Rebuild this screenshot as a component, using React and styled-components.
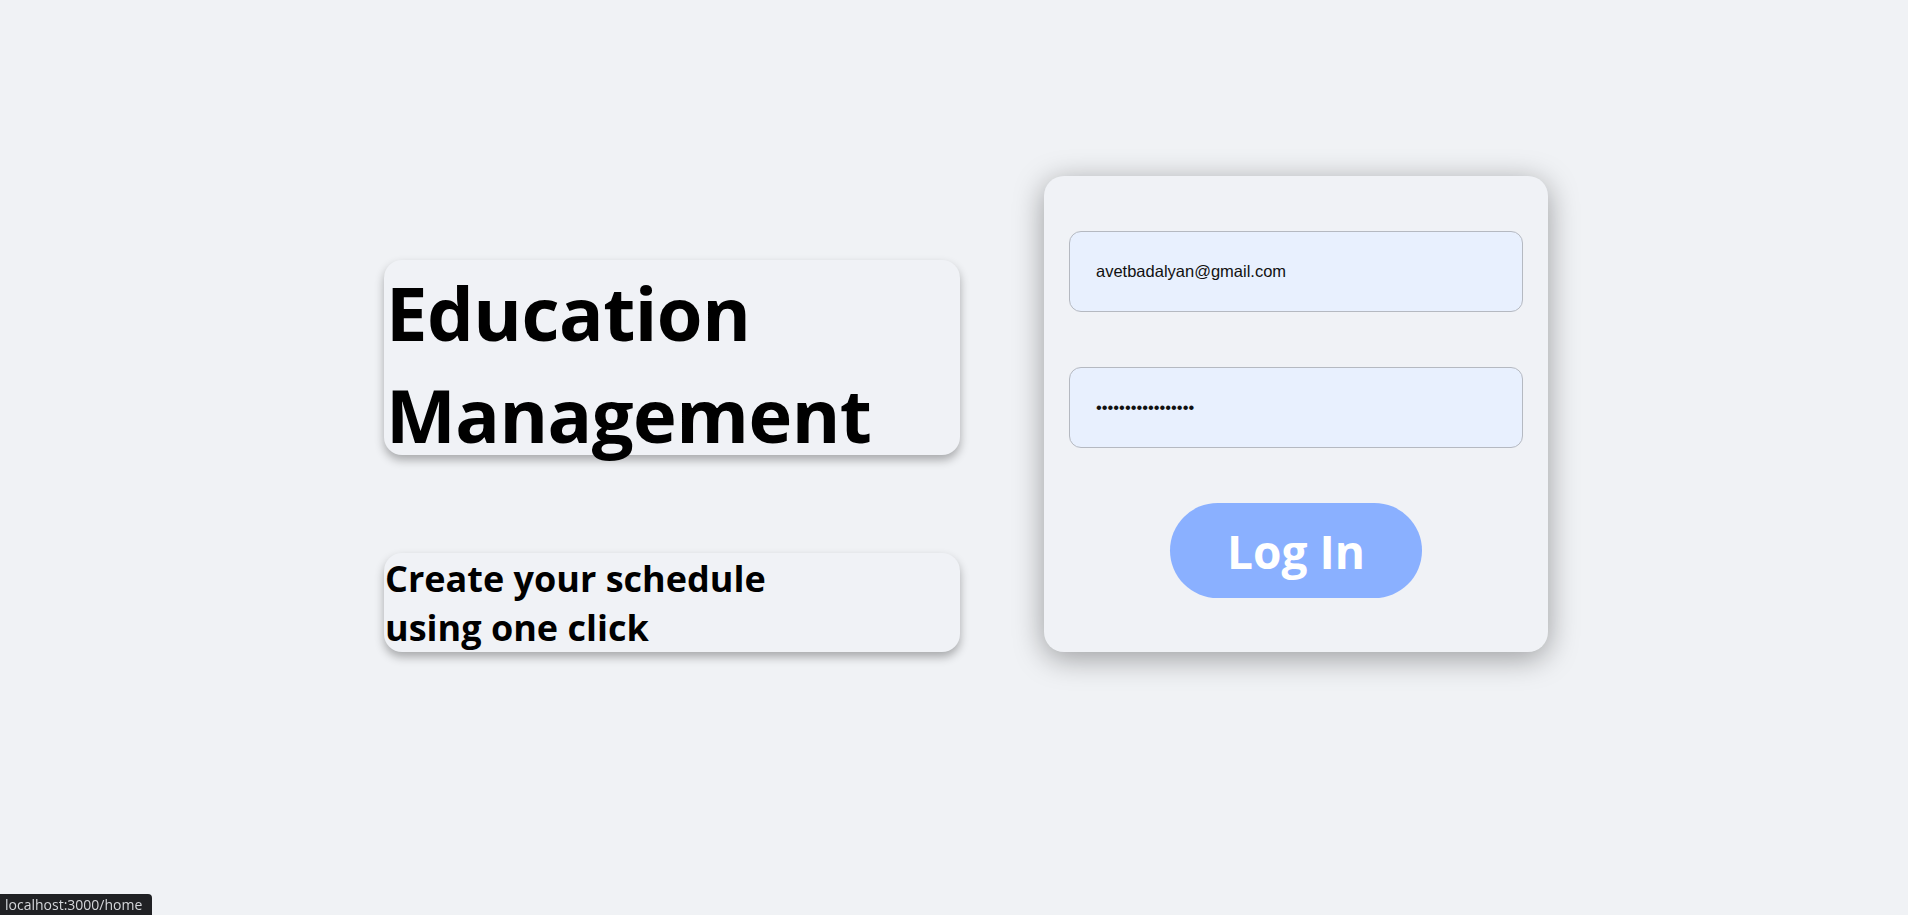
import React from "react";
import styled, { createGlobalStyle } from "styled-components";

const GlobalStyle = createGlobalStyle`
	html, body {
		margin: 0;
		padding: 0;
		background: #f0f2f5;
	}
	body {
		font-family: "Open Sans", "Noto Sans", sans-serif;
		min-height: 915px;
	}
`;

const Page = () => {
	return (
		<Main>
			<Intro>
				<TitleCard>
					<Title>Education Management</Title>
				</TitleCard>
				<SubtitleCard>
					<Subtitle>Create your schedule using one click</Subtitle>
				</SubtitleCard>
			</Intro>
			<LoginCard>
				<Field type="email" defaultValue="avetbadalyan@gmail.com" />
				<Field type="password" defaultValue="avetbadalyan12345" />
				<LoginButton type="button">Log In</LoginButton>
			</LoginCard>
			<StatusBar>localhost:3000/home</StatusBar>
		</Main>
	);
};

const Main = styled.main`
	display: flex;
	justify-content: center;
	align-items: flex-end;
	gap: 84px;
	padding: 176px 0 0 24px;
`;

const Intro = styled.section`
	display: flex;
	flex-direction: column;
	gap: 98px;
	width: 576px;
	flex-shrink: 0;
`;

const Card = styled.div`
	box-sizing: border-box;
	background: #f0f2f6;
	border-radius: 18px;
	box-shadow: 0 5px 10px rgba(0, 0, 0, 0.3);
`;

const TitleCard = styled(Card)`
	height: 195px;
	padding-top: 2px;
`;

const SubtitleCard = styled(Card)`
	height: 99px;
	padding-top: 1px;
`;

const Title = styled.h1`
	margin: 0;
	font-family: "Open Sans", "Noto Sans", sans-serif;
	font-size: 74px;
	font-weight: 700;
	line-height: 102px;
	letter-spacing: -0.5px;
	color: #000;
	width: 540px;
	padding-left: 2px;
`;

const Subtitle = styled.h2`
	margin: 0;
	font-family: "Open Sans", "Noto Sans", sans-serif;
	font-size: 36px;
	font-weight: 700;
	line-height: 49px;
	color: #000;
	width: 420px;
	padding-left: 1px;
`;

const LoginCard = styled.form`
	display: flex;
	flex-direction: column;
	align-items: center;
	gap: 55px;
	width: 504px;
	flex-shrink: 0;
	padding: 55px 25px 54px;
	box-sizing: border-box;
	background: #f0f2f6;
	border-radius: 20px;
	box-shadow: 0 6px 30px rgba(0, 0, 0, 0.36);
`;

const Field = styled.input`
	width: 100%;
	height: 81px;
	box-sizing: border-box;
	padding: 0 26px;
	border: 1px solid #b5b9c1;
	border-radius: 12px;
	background: #e8f0fe;
	font-family: "Liberation Sans", Arial, sans-serif;
	font-size: 16.5px;
	color: #111;
	outline: none;
`;

const LoginButton = styled.button`
	width: 252px;
	height: 95px;
	border: none;
	border-radius: 48px;
	background: #8ab0ff;
	color: #fff;
	font-family: "Open Sans", "Noto Sans", sans-serif;
	font-size: 46px;
	font-weight: 700;
	cursor: pointer;
`;

const StatusBar = styled.div`
	position: fixed;
	left: 0;
	bottom: 0;
	height: 21px;
	padding: 0 10px 0 5px;
	background: #202124;
	color: #d4d6da;
	border-top-right-radius: 4px;
	font-family: "Open Sans", sans-serif;
	font-size: 14px;
	line-height: 22px;
`;

const App = () => (
	<>
		<GlobalStyle />
		<Page />
	</>
);

export default App;
